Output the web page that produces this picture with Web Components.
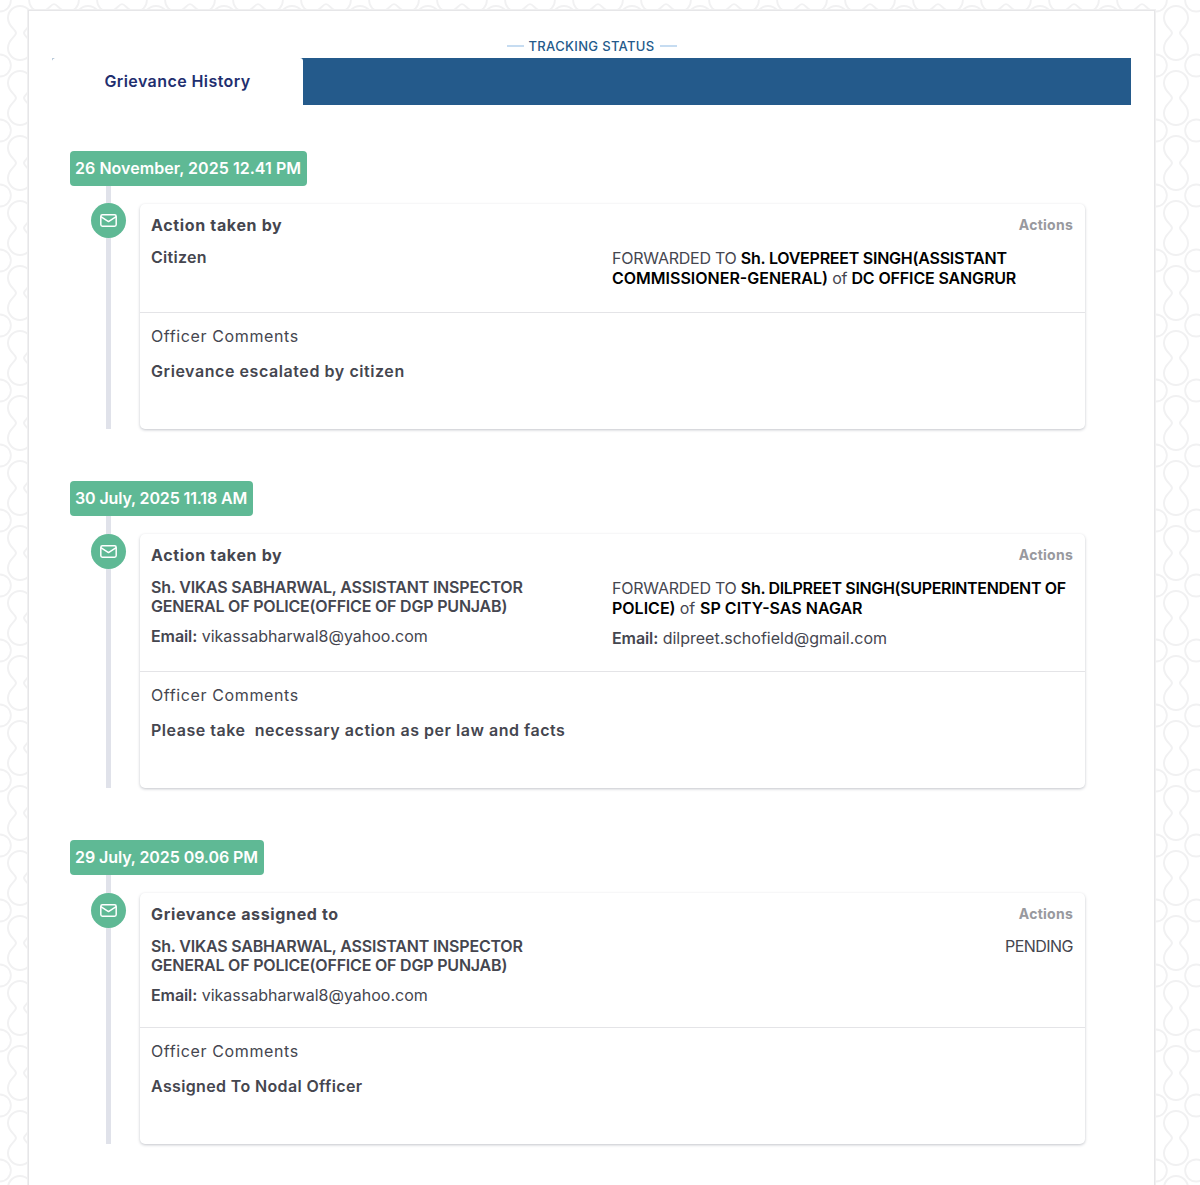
<!DOCTYPE html>
<html>
<head>
<meta charset="utf-8">
<title>Grievance History</title>
<style>
  html, body { margin: 0; padding: 0; }
  body {
    font-family: Inter, "Noto Sans", sans-serif;
    color: #45464f;
    background-color: #fff;
    background-image: url("data:image/svg+xml,%3Csvg xmlns='http://www.w3.org/2000/svg' width='68' height='65'%3E%3Cdefs%3E%3Cpath id='d' d='M-4 0C-4-4-12-6-12-15A12 12 0 1 1 12-15C12-6 4-4 4 0C4 4 12 6 12 15A12 12 0 1 1-12 15C-12 6-4 4-4 0Z' fill='none' stroke='%23f1f1f2' stroke-width='2'/%3E%3C/defs%3E%3Cuse href='%23d' x='20' y='33'/%3E%3Cuse href='%23d' transform='translate(54 0.5) rotate(90) scale(.92)'/%3E%3Cuse href='%23d' transform='translate(54 65.5) rotate(90) scale(.92)'/%3E%3Cuse href='%23d' transform='translate(-14 0.5) rotate(90) scale(.92)'/%3E%3Cuse href='%23d' transform='translate(-14 65.5) rotate(90) scale(.92)'/%3E%3C/svg%3E");
  }
  b { font-weight: 600; }
  b.dark { color: #000; }
  b.loose { letter-spacing: 0; }
  b.org { letter-spacing: -.14px; }
  b.org2 { letter-spacing: 0; margin-left: 1px; }
  b.tight { letter-spacing: -.33px; }
</style>
</head>
<body>

<page-shell>
  <tab-bar label="Grievance History"></tab-bar>

  <history-entry date="26 November, 2025 12.41 PM" style="--date-ls:.05px">
    <action-card heading="Action taken by" comment="Grievance escalated by citizen" style="--top-pad:24px;--comment-ls:.57px">
      <person-info slot="left" style="letter-spacing:.3px"><b>Citizen</b></person-info>
      <person-info slot="right" wide>FORWARDED TO <b class="dark">Sh. LOVEPREET SINGH(ASSISTANT</b> <b class="dark loose">COMMISSIONER-GENERAL)</b> of <b class="dark org">DC OFFICE SANGRUR</b></person-info>
    </action-card>
  </history-entry>

  <history-entry date="30 July, 2025 11.18 AM" style="--date-ls:-.13px;--dot-top:18px">
    <action-card heading="Action taken by" comment="Please take &nbsp;necessary action as per law and facts" style="--top-pad:23px;--comment-ls:.53px">
      <person-info slot="left" email="vikassabharwal8@yahoo.com"><b>Sh. VIKAS SABHARWAL, ASSISTANT INSPECTOR</b> <b>GENERAL OF POLICE(OFFICE OF DGP PUNJAB)</b></person-info>
      <person-info slot="right" wide email="dilpreet.schofield@gmail.com">FORWARDED TO <b class="dark tight">Sh. DILPREET SINGH(SUPERINTENDENT OF</b> <b class="dark loose">POLICE)</b> of <b class="dark org2">SP CITY-SAS NAGAR</b></person-info>
    </action-card>
  </history-entry>

  <history-entry date="29 July, 2025 09.06 PM" style="--date-ls:-.08px;--dot-top:18px">
    <action-card heading="Grievance assigned to" comment="Assigned To Nodal Officer" style="--comment-ls:.36px">
      <person-info slot="left" email="vikassabharwal8@yahoo.com"><b>Sh. VIKAS SABHARWAL, ASSISTANT INSPECTOR</b> <b>GENERAL OF POLICE(OFFICE OF DGP PUNJAB)</b></person-info>
      <person-info slot="right" align="right" style="letter-spacing:-.55px">PENDING</person-info>
    </action-card>
  </history-entry>
</page-shell>

<script>
class PageShell extends HTMLElement {
  constructor() {
    super();
    this.attachShadow({ mode: "open" });
    this.shadowRoot.innerHTML = `
      <style>
        :host {
          display: block;
          box-sizing: border-box;
          width: 1127px;
          height: 1175px;
          margin: 10px 0 0 28px;
          padding: 24px 23px 0 23px;
          background: #fff;
          border: 1px solid #e6e6e8;
          border-bottom: none;
          box-shadow: 0 0 0 1px #f0f0f1;
        }
        .title {
          display: flex;
          justify-content: center;
          align-items: center;
          gap: 5px;
          height: 21px;
          margin-bottom: 2px;
          color: #245a8b;
          font-size: 13px;
          font-weight: 500;
          letter-spacing: .33px;
          text-transform: uppercase;
        }
        .title::before, .title::after {
          content: "";
          width: 17px;
          height: 2px;
          background: #c6dcf1;
        }
      </style>
      <div class="title">Tracking Status</div>
      <slot></slot>
    `;
  }
}

class TabBar extends HTMLElement {
  constructor() {
    super();
    this.attachShadow({ mode: "open" });
    this.shadowRoot.innerHTML = `
      <style>
        :host {
          display: flex;
          height: 47px;
          background: #245a8b;
          border-radius: 2px 0 0 0;
          margin-bottom: 46px;
        }
        .tab {
          box-sizing: border-box;
          width: 251px;
          padding-bottom: 2px;
          display: flex;
          align-items: center;
          justify-content: center;
          background: #fff;
          color: #1f2f6f;
          font-size: 16px;
          font-weight: 600;
          letter-spacing: .42px;
          border-radius: 3px 3px 0 0;
        }
      </style>
      <div class="tab"></div>
    `;
    this.shadowRoot.querySelector(".tab").textContent = this.getAttribute("label");
  }
}

const entryTemplate = document.createElement("template");
entryTemplate.innerHTML = `
  <style>
    :host {
      display: block;
      margin: 0 0 52px 18px;
    }
    .date {
      display: inline-block;
      box-sizing: border-box;
      height: 35px;
      line-height: 34px;
      padding: 0 6px 0 5px;
      background: #5fb995;
      color: #fff;
      font-size: 16px;
      font-weight: 600;
      letter-spacing: var(--date-ls, 0);
      border-radius: 4px;
      white-space: nowrap;
    }
    .head { height: 35px; }
    .body { display: flex; width: 1015px; }
    .rail {
      flex: none;
      width: 70px;
      background: linear-gradient(#e0e2ea, #e0e2ea) 36px 0 / 5px 100% no-repeat;
    }
    .dot {
      width: 35px;
      height: 35px;
      margin: var(--dot-top, 17px) 0 0 21px;
      border-radius: 50%;
      background: #5fb995;
      display: flex;
      align-items: center;
      justify-content: center;
    }
    svg { width: 17px; height: 13px; display: block; margin-right: 1px; }
    ::slotted(*) { margin-top: 18px; flex: 1; }
  </style>
  <div class="head"><span class="date"></span></div>
  <div class="body">
    <div class="rail">
      <div class="dot">
        <svg viewBox="0 0 17 13" fill="none" stroke="#fff" stroke-width="1.5" stroke-linejoin="round" stroke-linecap="round">
          <rect x="0.8" y="0.8" width="15.4" height="11.4" rx="1.6"></rect>
          <path d="M1.2 2.8 8.5 7.6 15.8 2.8"></path>
        </svg>
      </div>
    </div>
    <slot></slot>
  </div>
`;

class HistoryEntry extends HTMLElement {
  constructor() {
    super();
    this.attachShadow({ mode: "open" });
    this.shadowRoot.appendChild(entryTemplate.content.cloneNode(true));
    this.shadowRoot.querySelector(".date").textContent = this.getAttribute("date");
  }
}

const cardTemplate = document.createElement("template");
cardTemplate.innerHTML = `
  <style>
    :host {
      display: block;
      background: #fff;
      border-radius: 5px;
      box-shadow: 0 1px 3px rgba(40, 45, 70, .28);
      font-size: 16px;
    }
    .top {
      padding: 11px 12px var(--top-pad, 22px) 11px;
      border-bottom: 1px solid #e4e4e7;
    }
    .row { display: flex; justify-content: space-between; align-items: center; height: 19px; }
    .heading { font-weight: 700; letter-spacing: .65px; }
    .actions { font-size: 14px; font-weight: 700; letter-spacing: .25px; color: #98999e; }
    .cols { display: grid; grid-template-columns: 461px 1fr; margin-top: 14px; }
    .bottom { height: 116px; box-sizing: border-box; padding: 14px 11px 0; }
    .label { line-height: 19px; letter-spacing: .62px; }
    .comment { margin-top: 16px; line-height: 19px; font-weight: 600; letter-spacing: var(--comment-ls, .5px); }
  </style>
  <div class="top">
    <div class="row"><span class="heading"></span><span class="actions">Actions</span></div>
    <div class="cols">
      <div><slot name="left"></slot></div>
      <div><slot name="right"></slot></div>
    </div>
  </div>
  <div class="bottom">
    <div class="label">Officer Comments</div>
    <div class="comment"></div>
  </div>
`;

class ActionCard extends HTMLElement {
  constructor() {
    super();
    this.attachShadow({ mode: "open" });
    this.shadowRoot.appendChild(cardTemplate.content.cloneNode(true));
    this.shadowRoot.querySelector(".heading").textContent = this.getAttribute("heading");
    this.shadowRoot.querySelector(".comment").textContent = this.getAttribute("comment");
  }
}

class PersonInfo extends HTMLElement {
  constructor() {
    super();
    this.attachShadow({ mode: "open" });
    this.shadowRoot.innerHTML = `
      <style>
        :host { display: block; line-height: 19px; letter-spacing: -.2px; }
        :host([slot="left"]) { max-width: 400px; }
        :host([wide]) { line-height: 20px; letter-spacing: -.24px; }
        :host([align="right"]) { text-align: right; }
        .email { margin-top: 10px; line-height: 20px; letter-spacing: 0; }
        .email b { font-weight: 600; letter-spacing: -.1px; }
      </style>
      <div class="name"><slot></slot></div>
    `;
    const email = this.getAttribute("email");
    if (email) {
      const line = document.createElement("div");
      line.className = "email";
      line.innerHTML = "<b>Email:</b> ";
      line.append(email);
      this.shadowRoot.appendChild(line);
    }
  }
}

customElements.define("page-shell", PageShell);
customElements.define("tab-bar", TabBar);
customElements.define("history-entry", HistoryEntry);
customElements.define("action-card", ActionCard);
customElements.define("person-info", PersonInfo);
</script>
</body>
</html>
